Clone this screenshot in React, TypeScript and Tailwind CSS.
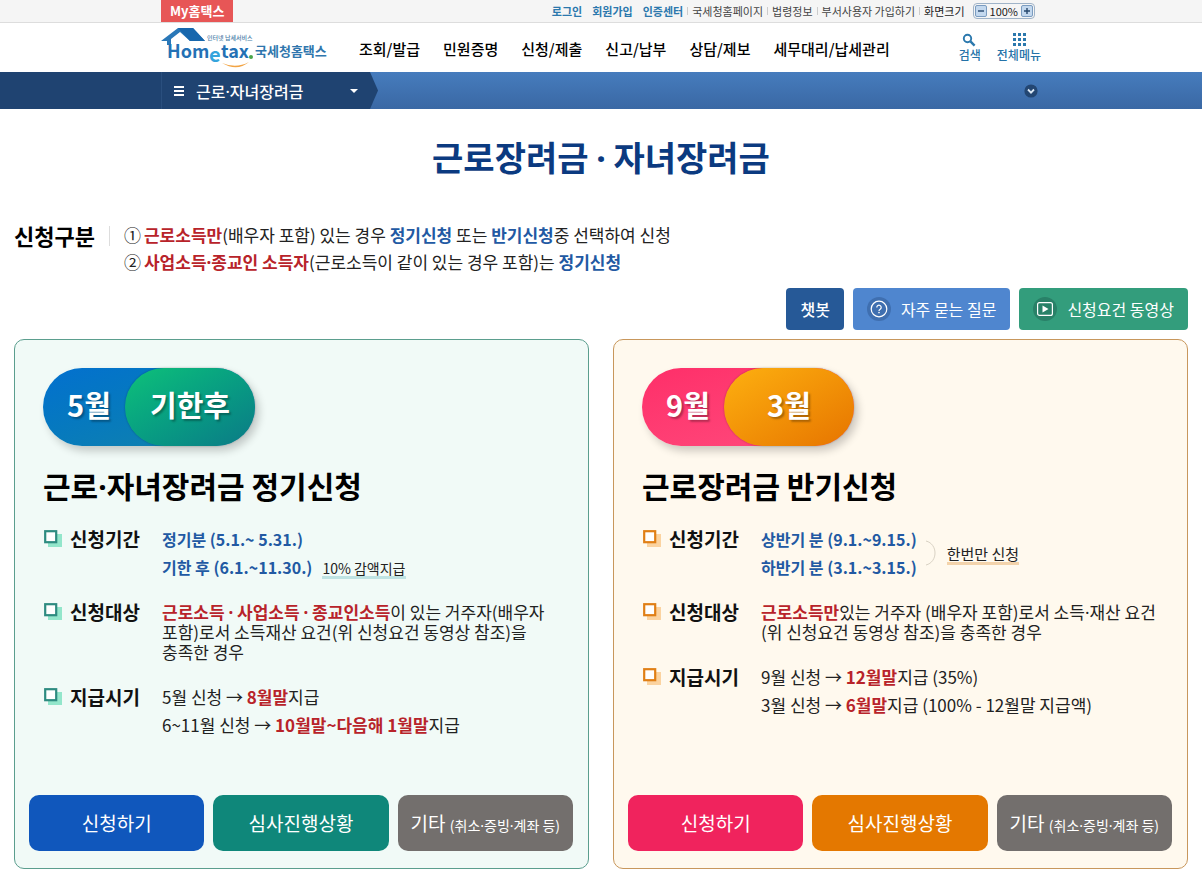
import React from "react";

interface Theme {
  card: string;
  stroke: string;
  shade: string;
  pillBack: string;
  pillFront: string;
  note: string;
  apply: string;
  progress: string;
}

const green: Theme = {
  card: "bg-[#f1faf7] border-[#5b9e8e]",
  stroke: "#2e8b80",
  shade: "#93e6cb",
  pillBack: "bg-linear-to-br from-[#0470cf] to-[#1483a8]",
  pillFront: "bg-linear-to-br from-[#0fc178] to-[#0c7a86]",
  note: "border-[#bfe3e3]",
  apply: "bg-[#1057bc]",
  progress: "bg-[#0f877a]",
};

const orange: Theme = {
  card: "bg-[#fff9ee] border-[#c8975c]",
  stroke: "#e07f16",
  shade: "#fbd3a0",
  pillBack: "bg-linear-to-br from-[#fe2e69] to-[#ff4b7e]",
  pillFront: "bg-linear-to-br from-[#fdb010] to-[#e67400]",
  note: "border-[#f3d3ab]",
  apply: "bg-[#f0235d]",
  progress: "bg-[#e47800]",
};

const menus = ["조회/발급", "민원증명", "신청/제출", "신고/납부", "상담/제보", "세무대리/납세관리"];
const loginLinks = ["로그인", "회원가입", "인증센터"];
const utilLinks = ["국세청홈페이지", "법령정보", "부서사용자 가입하기"];

const Red = ({ children }: { children: React.ReactNode }) => (
  <strong className="font-bold text-[#b8232a]">{children}</strong>
);

const Blue = ({ children }: { children: React.ReactNode }) => (
  <strong className="font-bold text-[#2259a3]">{children}</strong>
);

// The Korean font has a wide middle dot, the Latin one is narrow
const Dot = () => <span className="font-['Noto_Sans',sans-serif] leading-none">·</span>;

const Logo = () => (
  <svg width="166" height="42" viewBox="0 0 166 42" role="img" aria-label="Hometax 국세청홈택스">
    {/* Roof */}
    <path d="M0 14 L17 1 H32 L44 14 H29 L19 5 L10 12 V18 H6 V14 Z" fill="#2a78b8" />
    <path d="M17 1 H32 L44 14 H29 Z" fill="#1767ad" />
    <path d="M61 36 Q75 42 88 35 Q76 45 61 36 Z" fill="#f2a444" />
    <text x="6" y="31" fontSize="18" fontWeight="700" fill="#2471b5">Hom</text>
    <text x="48" y="35" fontSize="20" fontWeight="700" fill="#35a4dc">e</text>
    <text x="60" y="31" fontSize="18" fontWeight="700" fill="#2471b5">tax</text>
    <circle cx="90" cy="30" r="2" fill="#4aa548" />
    <text x="46" y="13" fontSize="6" fontWeight="500" fill="#4b7ea8">인터넷 납세서비스</text>
    <text x="94" y="29" fontSize="13" fontWeight="700" fill="#2f76ad">국세청홈택스</text>
  </svg>
);

const TopBar = () => (
  <div className="border-b border-[#dddddd] bg-[#f5f5f5]">
    <div className="mx-auto flex h-[22px] w-full max-w-[880px] items-center justify-between pr-1.5">
      <a href="#" className="flex h-[22px] items-center bg-[#e75656] px-[9px] text-[13px] font-bold text-white">
        My홈택스
      </a>
      <div className="flex items-center text-[11px] text-[#444444]">
        <div className="flex gap-[10px] pr-1 font-bold text-[#2b78ad]">
          {loginLinks.map((label) => (
            <a key={label} href="#">{label}</a>
          ))}
        </div>
        {utilLinks.map((label) => (
          <React.Fragment key={label}>
            <span className="h-2 w-px bg-[#cccccc]" />
            <a href="#" className="px-1">{label}</a>
          </React.Fragment>
        ))}
        <span className="h-2 w-px bg-[#cccccc]" />
        <span className="pl-1 text-[#222222]">화면크기</span>
        <div className="ml-2 flex h-4 items-center gap-[3px] rounded-sm border border-[#9fb3c8] px-px text-[#222222]">
          <button aria-label="축소" className="flex size-3 items-center justify-center rounded-xs border border-[#7b9cc0] bg-[#c3d8ee]">
            <svg width="6" height="6" viewBox="0 0 6 6"><path d="M0 3H6" stroke="#27486d" strokeWidth="1.4" /></svg>
          </button>
          100%
          <button aria-label="확대" className="flex size-3 items-center justify-center rounded-xs border border-[#7b9cc0] bg-[#c3d8ee]">
            <svg width="6" height="6" viewBox="0 0 6 6"><path d="M0 3H6M3 0V6" stroke="#27486d" strokeWidth="1.4" /></svg>
          </button>
        </div>
      </div>
    </div>
  </div>
);

const Header = () => (
  <header className="mx-auto flex h-[49px] w-full max-w-[880px] items-center">
    <a href="#" className="shrink-0"><Logo /></a>
    <nav className="ml-8 flex gap-[23px] pt-1 text-[15px] font-medium whitespace-nowrap text-black">
      {menus.map((label) => (
        <a key={label} href="#">{label}</a>
      ))}
    </nav>
    <div className="ml-auto flex gap-4 text-[12px] leading-4 font-medium whitespace-nowrap text-[#2472a8]">
      <button className="flex flex-col items-center">
        <svg width="20" height="14" viewBox="0 0 20 14" fill="none" stroke="#2b78ad">
          <circle cx="7.5" cy="5.5" r="3.7" strokeWidth="1.9" />
          <path d="M10.4 8.4 L14.6 12.6" strokeWidth="2.4" />
        </svg>
        검색
      </button>
      <button className="flex flex-col items-center">
        <svg width="14" height="14" viewBox="0 0 14 14" fill="#2b78ad">
          {[0, 5, 10].map((y) => [1, 6, 11].map((x) => (
            <rect key={`${x}-${y}`} x={x} y={y} width="3" height="3" />
          )))}
        </svg>
        전체메뉴
      </button>
    </div>
  </header>
);

const LocationBar = () => (
  <div className="flex h-[37px] bg-linear-to-b from-[#467cbd] to-[#3a68a4]">
    <div className="flex-1 bg-[#1f4371]" />
    <div className="flex w-full max-w-[880px]">
      <button className="flex w-[209px] items-center border-l border-[#2a4f7e] bg-[#1f4371] px-3 text-[16px] font-medium text-white">
        <svg width="10" height="10" viewBox="0 0 10 10" fill="#ffffff">
          <rect y="0" width="10" height="2" />
          <rect y="4" width="10" height="2" />
          <rect y="8" width="10" height="2" />
        </svg>
        <span className="ml-3">근로<Dot />자녀장려금</span>
        <svg className="ml-auto" width="8" height="4" viewBox="0 0 8 4"><path d="M0 0H8L4 4Z" fill="#ffffff" /></svg>
      </button>
      <svg width="8" height="37" viewBox="0 0 8 37"><path d="M0 0L8 18.5L0 37Z" fill="#1f4371" /></svg>
      <button aria-label="펼치기" className="mr-[3px] ml-auto">
        <svg width="14" height="14" viewBox="0 0 14 14">
          <circle cx="7" cy="7" r="6.6" fill="#234672" />
          <path d="M4 5.5L7 8.6L10 5.5" fill="none" stroke="#dce8f5" strokeWidth="1.8" />
        </svg>
      </button>
    </div>
    <div className="flex-1" />
  </div>
);

const Guide = () => (
  <section className="flex">
    <h2 className="text-[22px] leading-7 font-bold text-black">신청구분</h2>
    <span className="mt-[5px] ml-3.5 h-5 w-px bg-[#dddddd]" />
    <ol className="ml-3.5 text-[17px] leading-[27px] text-[#222222]">
      <li className="flex gap-[3px]">
        <span>①</span>
        <p><Red>근로소득만</Red>(배우자 포함) 있는 경우 <Blue>정기신청</Blue> 또는 <Blue>반기신청</Blue>중 선택하여 신청</p>
      </li>
      <li className="flex gap-[3px]">
        <span>②</span>
        <p><Red>사업소득<Dot />종교인 소득자</Red>(근로소득이 같이 있는 경우 포함)는 <Blue>정기신청</Blue></p>
      </li>
    </ol>
  </section>
);

const QuickButtons = () => (
  <div className="mt-[13px] flex justify-end gap-[9px] text-[16px] text-white">
    <button className="h-[42px] rounded-sm bg-[#265997] px-3.5 font-medium">챗봇</button>
    <button className="flex h-[42px] items-center gap-2.5 rounded-sm bg-[#4f86cf] px-3.5">
      <svg width="24" height="24" viewBox="0 0 24 24" fill="none" stroke="#ffffff">
        <circle cx="12" cy="12" r="12" fill="#3f6fb0" stroke="none" />
        <circle cx="12" cy="12" r="7.8" strokeWidth="1.2" />
        <path d="M9.8 10.4a2.2 2.2 0 1 1 3.4 1.8c-.8.5-1.2.8-1.2 1.7" strokeWidth="1.2" />
        <circle cx="12" cy="15.6" r=".8" fill="#ffffff" stroke="none" />
      </svg>
      자주 묻는 질문
    </button>
    <button className="flex h-[42px] items-center gap-2.5 rounded-sm bg-[#339d7c] px-3.5">
      <svg width="24" height="24" viewBox="0 0 24 24">
        <circle cx="12" cy="12" r="12" fill="#298168" />
        <rect x="4.6" y="5.6" width="14.8" height="12.8" rx="2" fill="none" stroke="#ffffff" strokeWidth="1.2" />
        <path d="M9.5 8.5V15.5L15.5 12Z" fill="#ffffff" />
      </svg>
      신청요건 동영상
    </button>
  </div>
);

interface RowProps {
  theme: Theme;
  label: string;
  dense?: boolean;
  children: React.ReactNode;
}

const Row = ({ theme, label, dense, children }: RowProps) => (
  <div className={dense ? "flex leading-5" : "flex leading-7"}>
    <dt className="flex w-[119px] shrink-0 items-start text-[19px] font-bold text-[#111111]">
      <svg className={dense ? "mr-2" : "mt-1 mr-2"} width="19" height="19" viewBox="0 0 19 19">
        <rect x="5" y="5" width="14" height="13" fill={theme.shade} />
        <rect x="2.2" y="2.2" width="11" height="11" fill="#ffffff" stroke={theme.stroke} strokeWidth="2.2" />
      </svg>
      {label}
    </dt>
    <dd className="text-[17px] break-keep text-[#222222]">{children}</dd>
  </div>
);

interface CardProps {
  theme: Theme;
  months: [string, string];
  title: React.ReactNode;
  children: React.ReactNode;
}

const BenefitCard = ({ theme, months, title, children }: CardProps) => (
  <section className={`flex flex-col rounded-[10px] border pt-7 pr-[15px] pb-[17px] pl-3.5 ${theme.card}`}>
    <div className={`ml-3.5 flex h-[78px] w-[212px] rounded-full text-[29px] font-bold text-white shadow-[4px_5px_8px_rgba(0,0,0,0.2)] text-shadow-[2px_2px_2px_rgba(0,0,0,0.3)] ${theme.pillBack}`}>
      <span className="flex flex-1 items-center justify-center pb-1 pl-2.5">{months[0]}</span>
      <span className={`flex w-[130px] items-center justify-center rounded-full pb-1 shadow-[0_0_2px_rgba(0,0,0,0.3)] ${theme.pillFront}`}>
        {months[1]}
      </span>
    </div>
    <h2 className="mt-[17px] ml-3.5 text-[30px] leading-11 font-bold text-black">{title}</h2>
    <dl className="mt-[18px] ml-3.5 flex flex-col gap-[21px]">{children}</dl>
    <div className="mt-auto grid grid-cols-3 gap-[9px] pt-14 text-[19px] text-white">
      <button className={`h-14 rounded-[10px] ${theme.apply}`}>신청하기</button>
      <button className={`h-14 rounded-[10px] ${theme.progress}`}>심사진행상황</button>
      <button className="h-14 rounded-[10px] bg-[#736f6d] whitespace-nowrap">
        기타 <span className="text-[14px]">(취소<Dot />증빙<Dot />계좌 등)</span>
      </button>
    </div>
  </section>
);

export default function App() {
  return (
    <div className="bg-white font-['Noto_Sans_CJK_KR','Noto_Sans',sans-serif]">
      <TopBar />
      <Header />
      <LocationBar />
      <main className="px-3.5 pb-[5px]">
        <h1 className="pt-6 text-center text-[34px] leading-12 font-bold text-[#0b3a80]">
          근로장려금 <Dot /> 자녀장려금
        </h1>
        <div className="mt-10">
          <Guide />
        </div>
        <QuickButtons />
        <div className="mt-[9px] grid grid-cols-2 gap-6">
          <BenefitCard theme={green} months={["5월", "기한후"]} title={<>근로<Dot />자녀장려금 정기신청</>}>
            <Row theme={green} label="신청기간">
              <p className="text-[16px]"><Blue>정기분 (5.1.~ 5.31.)</Blue></p>
              <p className="flex items-center gap-2.5 text-[16px]">
                <Blue>기한 후 (6.1.~11.30.)</Blue>
                <span className={`border-b-3 pt-1 text-[14px] leading-4 ${green.note}`}>10% 감액지급</span>
              </p>
            </Row>
            <Row theme={green} label="신청대상" dense>
              <Red>근로소득 <Dot /> 사업소득 <Dot /> 종교인소득</Red>이 있는 거주자(배우자 포함)로서 소득재산 요건(위 신청요건 동영상 참조)을 충족한 경우
            </Row>
            <Row theme={green} label="지급시기">
              <p>5월 신청 → <Red>8월말</Red>지급</p>
              <p>6~11월 신청 → <Red>10월말~다음해 1월말</Red>지급</p>
            </Row>
          </BenefitCard>

          <BenefitCard theme={orange} months={["9월", "3월"]} title="근로장려금 반기신청">
            <Row theme={orange} label="신청기간">
              <div className="flex items-center">
                <div className="text-[16px]">
                  <p><Blue>상반기 분 (9.1.~9.15.)</Blue></p>
                  <p><Blue>하반기 분 (3.1.~3.15.)</Blue></p>
                </div>
                <svg className="mr-2.5 ml-2" width="12" height="26" viewBox="0 0 12 26" fill="none" stroke="#d9d2c4">
                  <path d="M1 1C13 4 13 22 1 25" />
                </svg>
                <span className={`border-b-3 pt-1 text-[15px] leading-4 ${orange.note}`}>한번만 신청</span>
              </div>
            </Row>
            <Row theme={orange} label="신청대상" dense>
              <Red>근로소득만</Red>있는 거주자 (배우자 포함)로서 소득<Dot />재산 요건 (위 신청요건 동영상 참조)을 충족한 경우
            </Row>
            <Row theme={orange} label="지급시기">
              <p>9월 신청 → <Red>12월말</Red>지급 (35%)</p>
              <p>3월 신청 → <Red>6월말</Red>지급 (100% - 12월말 지급액)</p>
            </Row>
          </BenefitCard>
        </div>
      </main>
    </div>
  );
}
